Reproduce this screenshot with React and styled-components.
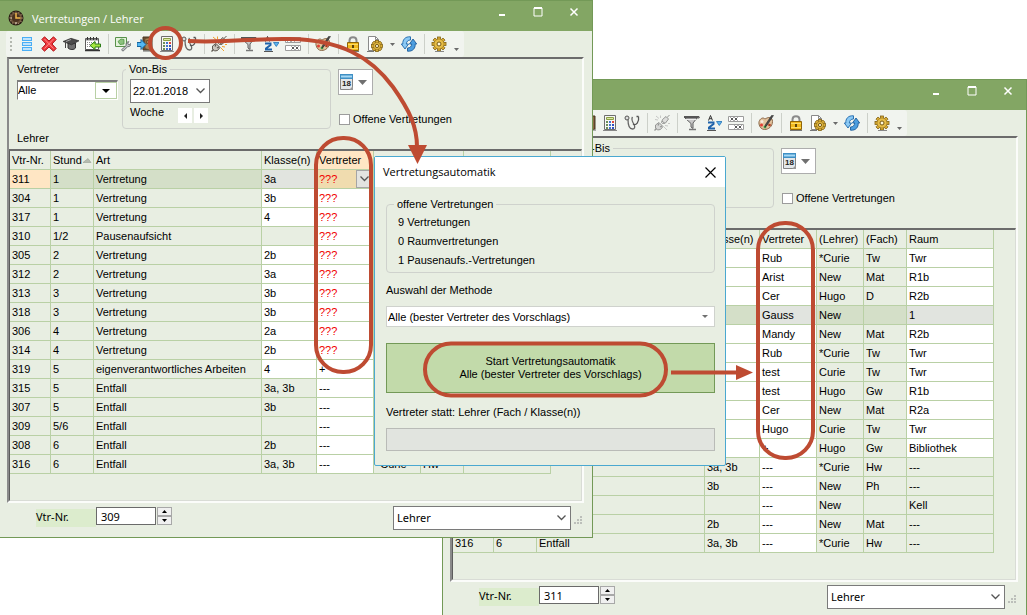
import React from "react"
import styled, { createGlobalStyle } from "styled-components"

const color = {
  face: "#e8eee2",
  title: "#83a664",
  edge: "#739957",
  grid: "#b9d0a5",
  selected: "#d4dfc8",
  disabled: "#e1e4df",
  mark: "#be4b32",
}

const GlobalStyle = createGlobalStyle`
  *, *::before, *::after {
    box-sizing: border-box;
  }
  body {
    margin: 0;
    background: #fff;
  }
  body, button, input, select {
    font: 11px/14px "Liberation Sans", Arial, sans-serif;
    color: #000;
  }
`

const Desktop = styled.main`
  position: relative;
  min-height: 100vh;
  overflow: hidden;
`

/* window frame */

const Window = styled.section`
  position: absolute;
  top: ${props => props.$y}px;
  left: ${props => props.$x}px;
  width: ${props => props.$w}px;
  display: flex;
  flex-direction: column;
  background: ${color.face};
  border: 1px solid ${color.edge};
`

const TitleBar = styled.header`
  display: flex;
  align-items: center;
  height: 30px;
  padding: 0 10px 0 8px;
  background: ${color.title};
  color: #fff;
`

const Title = styled.h1`
  flex: 1;
  margin: 0 0 0 8px;
  padding-top: 5px;
  font: 400 11px/16px "Open Sans", "Noto Sans", sans-serif;
`

const LogoBox = styled.span`
  display: flex;
  width: 16px;
  padding-top: 4px;
`

const CaptionButtons = styled.div`
  display: flex;
  gap: 20px;
  padding-bottom: 8px;
`

const CaptionButton = styled.button`
  display: flex;
  align-items: center;
  justify-content: center;
  width: 16px;
  height: 16px;
  padding: 0;
  border: 0;
  background: none;
  color: inherit;
`

const Toolbar = styled.div`
  display: flex;
  align-items: center;
  align-self: flex-start;
  height: 26px;
  margin-left: 6px;
  padding-right: 2px;
  background: #f1f4ef;
  border-radius: 3px;
`

const Grip = styled.span`
  width: 2px;
  height: 14px;
  margin: 0 4px;
  background: repeating-linear-gradient(#b4b8b0 0 2px, transparent 2px 4px);
`

const ToolButton = styled.button`
  display: flex;
  align-items: center;
  justify-content: center;
  width: ${props => (props.$narrow ? 12 : 22)}px;
  height: 22px;
  padding: 0;
  padding-top: ${props => (props.$low ? 10 : 0)}px;
  border: 0;
  background: none;
`

const Separator = styled.span`
  width: 8px;
  height: 20px;
  background: linear-gradient(#ccd0c9, #ccd0c9) center / 1px 100% no-repeat;
`

const Panel = styled.div`
  height: 446px;
  margin: 0 8px 0 7px;
  border: 2px solid;
  border-color: #6b6b6b #fbfcfa #fbfcfa #8a8a8a;
`

/* filter area */

const FilterBar = styled.div`
  display: flex;
  height: 72px;
  padding: 3px 8px 0;
`

const FilterColumn = styled.div`
  display: flex;
  flex-direction: column;
  gap: 4px;
  width: 101px;
  margin-right: 4px;
`

const Group = styled.fieldset`
  width: ${props => props.$w || "auto"};
  height: ${props => props.$h}px;
  min-width: 0;
  margin: 0;
  padding: ${props => props.$pad};
  border: 1px solid #cfd2cd;
  border-radius: 4px;
`

const Legend = styled.legend`
  margin-left: -4px;
  padding: 0 3px;
  line-height: 14px;
`

const SelectBox = styled.span`
  position: relative;
  display: block;
  width: ${props => props.$w || "auto"};
  height: ${props => props.$h}px;
`

const Select = styled.select`
  appearance: none;
  display: block;
  width: 100%;
  height: 100%;
  padding: 0 ${props => (props.$large ? 3 : 1)}px;
  background: #fff;
  border: 1px solid ${props => props.$line || "#7a7a7a"};
  border-radius: 0;
  ${props => props.$large && `font: 11px/16px "Noto Sans", sans-serif;`}
`

const SunkenSelect = styled(Select)`
  padding: 0 0 2px;
  border-width: 2px 1px 1px;
  border-color: #7d7d7d #fff #fff #7d7d7d;
`

const SelectArrow = styled.span`
  position: absolute;
  top: ${props => (props.$framed ? 2 : 1)}px;
  right: 1px;
  bottom: 1px;
  width: ${props => (props.$framed ? 22 : 18)}px;
  display: flex;
  align-items: center;
  justify-content: center;
  border: ${props => (props.$framed ? "1px solid #b9d0a5" : "0")};
  pointer-events: none;
`

const DateField = styled.label`
  display: flex;
  align-items: center;
  width: 80px;
  height: 24px;
  padding-right: 4px;
  background: #fff;
  border: 1px solid #7a7a7a;
`

const DateInput = styled.input`
  flex: 1;
  min-width: 0;
  padding: 0 2px;
  border: 0;
  background: none;
`

const WeekRow = styled.div`
  display: flex;
  align-items: flex-start;
  gap: 14px;
  padding-top: 2px;
`

const WeekButtons = styled.span`
  display: flex;
  gap: 2px;
  padding-top: 3px;
`

const WeekButton = styled.button`
  display: flex;
  align-items: center;
  justify-content: center;
  width: 14px;
  height: 15px;
  padding: 0;
  border: 0;
  background: #fff;
`

const OptionColumn = styled.div`
  display: flex;
  flex-direction: column;
  align-items: flex-start;
  gap: 17px;
  padding: 7px 0 0 7px;
`

const CalendarButton = styled.button`
  display: flex;
  align-items: center;
  gap: 4px;
  width: 35px;
  height: 26px;
  padding: 0 0 0 1px;
  background: #fff;
  border: 1px solid #adadad;
`

const CheckLabel = styled.label`
  display: flex;
  align-items: center;
  gap: 3px;
  white-space: nowrap;
`

const CheckBox = styled.input`
  appearance: none;
  width: 11px;
  height: 11px;
  margin: 0 0 0 1px;
  background: #fff;
  border: 1px solid #9c9c9c;
`

const Caption = styled.p`
  margin: 0;
  padding: 0 8px 4px;
`

/* lesson table */

const TableFrame = styled.div`
  height: 352px;
  border-top: 2px solid #6b6b6b;
  border-left: 1px solid #5c5c5c;
  border-right: 1px solid #d9dcd6;
  border-bottom: 1px solid #d9dcd6;
  overflow: hidden;
`

const Table = styled.table`
  table-layout: fixed;
  width: 541px;
  border-spacing: 0;
`

const Cell = styled.td`
  height: 19px;
  padding: 0 0 0 2px;
  overflow: hidden;
  white-space: nowrap;
  text-align: left;
  font-weight: 400;
  line-height: 16px;
  background: ${props => props.$bg || "transparent"};
  color: ${props => (props.$open ? "#f00000" : "#000")};
  border: 0 solid ${color.grid};
  border-width: 0 1px 1px 0;
`

const CellRow = styled.span`
  display: flex;
  align-items: center;
  justify-content: space-between;
  height: 18px;
`

const DropButton = styled.button`
  display: flex;
  align-items: center;
  justify-content: center;
  width: 17px;
  height: 18px;
  padding: 0;
  background: #e3e3e0;
  border: 1px solid #a5a5a5;
`

/* footer */

const Footer = styled.footer`
  display: flex;
  align-items: flex-start;
  height: 34px;
  padding: 3px 10px 0 36px;
`

const NumberLabel = styled.label`
  width: 60px;
  height: 18px;
  margin-top: 3px;
  background: #dceccd;
  font: 400 11px/16px "Noto Sans", sans-serif;
`

const NumberInput = styled.input`
  width: 60px;
  height: 18px;
  margin-top: 1px;
  padding: 0 4px;
  background: #fff;
  border: 1px solid #6a6a6a;
  font: 11px/16px "Noto Sans", sans-serif;
`

const Spinner = styled.span`
  display: flex;
  flex-direction: column;
  width: 15px;
  margin: 1px auto 0 1px;
`

const SpinButton = styled.button`
  display: flex;
  align-items: center;
  justify-content: center;
  height: 9px;
  padding: 0;
  background: #f0f0f0;
  border: 1px solid #a8a8a8;
`

const SizeGrip = styled.span`
  display: flex;
  padding: 10px 0 0 3px;
`

/* dialog */

const Dialog = styled.div`
  position: absolute;
  top: 156px;
  left: 374px;
  width: 352px;
  background: ${color.face};
  border: 1px solid #4aa8d0;
  border-radius: 2px;
`

const DialogHead = styled.div`
  display: flex;
  align-items: center;
  justify-content: space-between;
  height: 30px;
  padding: 0 7px 0 8px;
  background: #fff;
`

const DialogTitle = styled.h2`
  margin: 0;
  font: 500 11px/16px "Open Sans", "Noto Sans", sans-serif;
`

const DialogBody = styled.div`
  display: flex;
  flex-direction: column;
  padding: 10px 10px 14px 11px;
`

const CountList = styled.ul`
  display: grid;
  gap: 5px;
  margin: 0;
  padding: 0;
  list-style: none;
`

const FieldLabel = styled.label`
  margin: ${props => props.$gap || "10px 0 9px"};
`

const StartButton = styled.button`
  height: 50px;
  margin-top: 16px;
  padding: 0;
  line-height: 13px;
  background: #c2daaa;
  border: 1px solid ${color.edge};
`

const StatusField = styled.input`
  height: 23px;
  background: ${color.disabled};
  border: 1px solid #b9bbb7;
`

const Marks = styled.svg`
  position: absolute;
  top: 0;
  left: 0;
  pointer-events: none;
`

/* icons */

const Icon = ({ children, w = 16, h = 16, ...rest }) => (
  <svg width={w} height={h} viewBox={`0 0 ${w} ${h}`} fill="none" aria-hidden="true" {...rest}>
    {children}
  </svg>
)

const Triangle = () => (
  <Icon w={5} h={3}>
    <path d="M0 0h5L2.500 3z" fill="#6a6a6a" />
  </Icon>
)

const Chevron = () => (
  <Icon w={9} h={6}>
    <path d="M.5.5l4 4 4-4" stroke="#555" strokeWidth="1.300" />
  </Icon>
)

const LogoIcon = () => (
  <Icon>
    <circle cx="8" cy="8" r="7.500" fill="#2a1d14" />
    <circle cx="8" cy="8" r="6" fill="#6d523a" stroke="#a08468" strokeWidth="1.200" strokeDasharray="1 2" />
    <circle cx="8" cy="8" r="4" fill="#4a3220" />
    <path d="M8 3v5h4.500" stroke="#f1b84c" strokeWidth="1.500" />
    <path d="M2.500 8h1.500M8 12v2" stroke="#e8dccb" />
  </Icon>
)

const ListIcon = () => (
  <Icon>
    {[1, 6, 11].map(y => (
      <rect key={y} x="3.500" y={y + 0.5} width="9" height="3" fill="#bfe3fc" stroke="#4aaef5" />
    ))}
  </Icon>
)

const DeleteIcon = () => (
  <Icon>
    <path
      d="M3.500.8L8 5l4.500-4.200 2.700 2.700L11 8l4.200 4.500-2.700 2.700L8 11l-4.500 4.200-2.700-2.700L5 8 .8 3.500z"
      fill="#ef3b3f"
      stroke="#b0181d"
    />
    <path d="M3.500 3l9 9.500M12.500 3l-9 9.500" stroke="#ff8587" />
  </Icon>
)

const CapIcon = () => (
  <Icon>
    <path d="M5 7v5c2 2 6 2 7.500 0V7z" fill="#6f6f6f" stroke="#333" />
    <path d="M0 5.500L8 2.300l8 2.500-7.500 4z" fill="#4b4b4b" stroke="#222" strokeWidth=".6" />
    <path d="M2.500 6.500V12" stroke="#444" />
    <path d="M3 5.500l5-2" stroke="#a5a5a5" />
  </Icon>
)

const CalendarArrowIcon = () => (
  <Icon>
    <path d="M.5 2.500h13v11H.5z" fill="#fff" stroke="#5c5c5c" />
    <path d="M1 3h12v1.500H1z" fill="#888" />
    <path d="M2.500 1v3M5.500 1v3M8.500 1v3M11.500 1v3" stroke="#333" />
    <path d="M2 6.500h10M2 8.500h4M2 10.500h4" stroke="#8a8a8a" strokeDasharray="1 1" />
    <path d="M0 14.500h15" stroke="#333" strokeWidth="1.500" />
    <path d="M5 9.500l5-4v2.500h5.500v3H10v2.500z" fill="#a4e63e" stroke="#2c7d17" />
  </Icon>
)

const PlanWrenchIcon = () => (
  <Icon>
    <path d="M.5 1.500h11v9H.5z" fill="#e5f2dc" stroke="#58924b" />
    <path d="M6 3L3 5.500 5 8.500 9 8V3.500z" fill="#8cc17e" stroke="#4d9341" strokeWidth=".8" />
    <path
      d="M6.500 13.800l4.700-4.300c-.6-2 .6-3.900 2.700-3.800L12.700 7l.5 1.400 1.500.2 1.100-1.200c.4 2-1.200 3.500-3.100 3.300L8 15.200z"
      fill="#c6c9cc"
      stroke="#55595d"
      strokeWidth=".8"
    />
  </Icon>
)

const DoorIcon = () => (
  <Icon>
    <path d="M6 1h9v13H6z" fill="#6d5237" stroke="#493624" />
    <path d="M8 2.500l6-1v13l-6-2z" fill="#a98055" stroke="#604628" strokeWidth=".7" />
    <path d="M9.500 4.500h3v3h-3z" stroke="#76532f" />
    <path d="M0 6.500h4v-3l5 5-5 5v-3H0z" fill="#53b8f4" stroke="#17649d" />
    <path d="M6 15h10" stroke="#666" />
  </Icon>
)

const CalculatorIcon = () => (
  <Icon>
    <path d="M2.500.5h11v14h-11z" fill="#f8f8f6" stroke="#6e6e6e" />
    <path d="M4.500 2.500h7v2h-7z" fill="#dbe8a5" stroke="#8a9f45" />
    {[6, 9, 12].map(y => (
      <g key={y}>
        <rect x="4" y={y} width="2" height="2" fill="#6c8f5a" />
        <rect x="7" y={y} width="2" height="2" fill="#4272cf" />
        <rect x="10" y={y} width="2" height="2" fill={y === 6 ? "#e0473c" : "#2f50c0"} />
      </g>
    ))}
    <path d="M1 15.500h14" stroke="#888" />
  </Icon>
)

const StethoscopeIcon = () => (
  <Icon>
    <circle cx="3" cy="3" r="2" fill="#ddd" stroke="#555" />
    <path d="M4 4.500c0 6 2 9.500 4.500 9.500 2 0 3-2 1.500-4.500S7 4 8.500 2" stroke="#666" strokeWidth="1.300" />
    <path d="M9 9c3 2 6.500-2 5.500-7.500M12.500 1.500h2" stroke="#555" strokeWidth="1.300" />
  </Icon>
)

const PlugIcon = ({ off }) => (
  <Icon style={{ filter: off ? "grayscale(1)" : "none" }} opacity={off ? 0.6 : 1}>
    <path d="M8.500 4.500l3.500-3 2.500 2.500-3 4-3 .5-1-1z" fill="#d5cfc6" stroke="#5e5850" />
    <path d="M13 2.500L15.500 0M8 6l3 2.500" stroke="#5e5850" />
    <path d="M1.500 10L5 7.500 9 11.500l-2.500 3-3 .5-2-2z" fill="#cac5bd" stroke="#5e5850" />
    <path d="M2.500 13.500L.5 15.500M5 8.500l-1 2M8 11l-2 1" stroke="#5e5850" strokeWidth="1.300" />
    <path d="M2 1l3 2.500M1 4.500l3 .5M6.500.5V3M11 10.500l3 .5M10 12l3 3M14 8.500h2" stroke="#f1a12e" />
  </Icon>
)

const FunnelIcon = () => (
  <Icon>
    <path d="M1 3h12l-4 5v5.500L7 12V8.500z" fill="#c9c9c9" stroke="#5f5f5f" />
    <path d="M0 2h15" stroke="#555" strokeWidth="2" />
    <path d="M2 4.500h10" stroke="#eee" />
    <path d="M13.500 3.500L16 2M5 14.500h7" stroke="#777" strokeWidth="1.300" />
  </Icon>
)

const SortIcon = () => (
  <Icon>
    <path d="M2.500 5.500l2-5 2 5M3.200 3.700h2.600" stroke="#333" />
    <path d="M2 7.500h5.500v1.500L3 12.500v1h6" stroke="#1e62ab" strokeWidth="2" />
    <path d="M10.500 6.500H16l-2.700 4z" fill="#5eb4ee" stroke="#2272b5" strokeWidth=".8" />
    <path d="M1 15.500h9" stroke="#555" />
  </Icon>
)

const FormatIcon = () => (
  <Icon>
    <path d="M.5 1.500h15v5H.5zM.5 9.500h15v5H.5z" fill="#fff" stroke="#9c9c9c" />
    <path
      d="M2.500 2.500l3 3m0-3l-3 3M6.500 2.500l3 3m0-3l-3 3M6.500 10.500l3 3m0-3l-3 3M10.500 10.500l3 3m0-3l-3 3"
      stroke="#444"
      strokeWidth=".9"
    />
  </Icon>
)

const PaletteIcon = () => (
  <Icon>
    <path
      d="M1 9c-.6-3.500 2-6 4-6 1.500 0 1.500 1.500 3 .5C10 2 14.500 2 14.500 6.500c0 5-4 8-8 8C3.500 14.500 1.500 12 1 9z"
      fill="#e3c29c"
      stroke="#8c6a4b"
    />
    <circle cx="4" cy="6.500" r="1.500" fill="#f7ece0" />
    <circle cx="3.500" cy="10" r="1.500" fill="#e23e35" />
    <circle cx="7" cy="12" r="1.400" fill="#3f9b48" />
    <circle cx="11.500" cy="10" r="1.300" fill="#b5371f" />
    <path d="M15.500.5L9 10.500 7 12l.5-2.500L13.500.5z" fill="#4a4a4a" stroke="#222" strokeWidth=".5" />
  </Icon>
)

const LockIcon = () => (
  <Icon>
    <path d="M4.500 8V4.500c0-4.500 7-4.500 7 0V8" stroke="#8a8a8a" strokeWidth="2" />
    <path d="M2.500 6.500h11v8h-11z" fill="#f2b91d" stroke="#8f6508" />
    <path d="M3 8.500h10M3 12.500h10" stroke="#fbdc69" />
    <path d="M7 9h2v3H7z" fill="#5e4308" />
    <path d="M2 15.500h12" stroke="#777" />
  </Icon>
)

const teeth = [0, 45, 90, 135]

const Gear = ({ cx, cy, r }) => (
  <g>
    {teeth.map(a => (
      <rect
        key={a}
        x={cx - 1.5}
        y={cy - r}
        width="3"
        height={r * 2}
        fill="#dcae34"
        stroke="#816114"
        strokeWidth=".8"
        transform={`rotate(${a} ${cx} ${cy})`}
      />
    ))}
    <circle cx={cx} cy={cy} r={r - 2} fill="#e6bd48" stroke="#937019" strokeWidth=".6" />
    <circle cx={cx} cy={cy} r={r / 3.5} fill="#fff8dc" stroke="#76580f" />
  </g>
)

const PageGearIcon = () => (
  <Icon>
    <path d="M1.500.5h7l3 3v11h-10z" fill="#fff" stroke="#8a8a8a" />
    <path d="M8.500.5v3h3" stroke="#8a8a8a" />
    <path d="M0 15.500h7" stroke="#777" />
    <Gear cx={10} cy={10} r={5.5} />
  </Icon>
)

const RefreshIcon = () => (
  <Icon>
    <path
      d="M9.500.8C4 .3 1.500 4 1.800 8H.3l3.700 5 3.500-5H5.300C5.500 5.500 7 4 9.500 4z"
      fill="#8ccaf5"
      stroke="#1d67aa"
      strokeWidth=".9"
    />
    <path
      d="M6.500 15.200c5.500.5 8-3.200 7.700-7.200h1.500L12 3 8.500 8h2.200c-.2 2.500-1.700 4-4.200 4z"
      fill="#4d9edf"
      stroke="#1d5c9b"
      strokeWidth=".9"
    />
  </Icon>
)

const GearIcon = () => (
  <Icon>
    <Gear cx={8} cy={8} r={7} />
    <path d="M4 15.500h9" stroke="#888" />
  </Icon>
)

const DayIcon = () => (
  <Icon w={14} h={17}>
    <path d="M.5.5h12v15H.5z" fill="#e3e7ea" stroke="#848484" />
    <path d="M0 0h13v5H0z" fill="#3f8fc4" />
    <path d="M1 2.500h11" stroke="#a6d8f5" strokeWidth="2" />
    <text x="2" y="12" fontFamily="Liberation Sans" fontSize="8" fontWeight="700" fill="#222">
      18
    </text>
    <path d="M9 16l4-4v4z" fill="#999" />
  </Icon>
)

const tools = [
  ["Liste", ListIcon],
  ["Löschen", DeleteIcon],
  ["Lehrer", CapIcon],
  ["Kalender", CalendarArrowIcon],
  null,
  ["Einstellung", PlanWrenchIcon],
  ["Raum", DoorIcon],
  ["Vertretungsautomatik", CalculatorIcon],
  ["Diagnose", StethoscopeIcon],
  null,
  ["Kopplung", PlugIcon],
  null,
  ["Filter", FunnelIcon],
  ["Sortieren", SortIcon],
  ["Format", FormatIcon],
  null,
  ["Farben", PaletteIcon],
  null,
  ["Sperren", LockIcon],
  ["Seite", PageGearIcon],
  ["Seitenmenü", Triangle, "narrow"],
  ["Aktualisieren", RefreshIcon],
  null,
  ["Optionen", GearIcon],
  ["Mehr", Triangle, "low"],
]

const columns = [
  ["Vtr-Nr.", 41],
  ["Stunde", 43],
  ["Art", 168],
  ["Klasse(n)", 55],
  ["Vertreter", 57],
  ["(Lehrer)", 47],
  ["(Fach)", 43],
  ["Raum", 87],
]

// nr, hour, kind, class, substitute, teacher, subject, room
const lessons = [
  ["311", "1", "Vertretung", "3a", "Rub", "*Curie", "Tw", "Twr"],
  ["304", "1", "Vertretung", "3b", "Arist", "New", "Mat", "R1b"],
  ["317", "1", "Vertretung", "4", "Cer", "Hugo", "D", "R2b"],
  ["310", "1/2", "Pausenaufsicht", "", "Gauss", "New", "", "1"],
  ["305", "2", "Vertretung", "2b", "Mandy", "New", "Mat", "R2b"],
  ["312", "2", "Vertretung", "3a", "Rub", "*Curie", "Tw", "Twr"],
  ["313", "3", "Vertretung", "3b", "test", "Curie", "Tw", "Twr"],
  ["318", "3", "Vertretung", "3b", "test", "Hugo", "Gw", "R1b"],
  ["306", "4", "Vertretung", "2a", "Cer", "New", "Mat", "R2a"],
  ["314", "4", "Vertretung", "2b", "Hugo", "Curie", "Tw", "Twr"],
  ["319", "5", "eigenverantwortliches Arbeiten", "4", "+", "Hugo", "Gw", "Bibliothek"],
  ["315", "5", "Entfall", "3a, 3b", "---", "*Curie", "Hw", "---"],
  ["307", "5", "Entfall", "3b", "---", "New", "Ph", "---"],
  ["309", "5/6", "Entfall", "", "---", "New", "", "Kell"],
  ["308", "6", "Entfall", "2b", "---", "New", "Mat", "---"],
  ["316", "6", "Entfall", "3a, 3b", "---", "*Curie", "Hw", "---"],
]

const cellColor = (row, col, selected, open) => {
  const editable =
    col === 4 || (col === 3 && row < 11 && row !== 3) || (col === 7 && row < 11)
  if (row === selected) {
    if (open && col === 0) return "#ffe6c4"
    if (open && col === 4) return "#f0dcaf"
    return editable ? color.disabled : color.selected
  }
  return editable ? "#fff" : null
}

const LessonTable = ({ open, selected }) => (
  <Table>
    <colgroup>
      {columns.map(([name, width]) => (
        <col key={name} style={{ width }} />
      ))}
    </colgroup>
    <thead>
      <tr>
        {columns.map(([name], i) => (
          <Cell as="th" key={name} $bg={open && i === 4 ? "#ffe6c4" : null}>
            {i === 1 ? (
              <CellRow>
                Stund
                <Icon w={11} h={5}>
                  <path d="M1 4.500h8L6 .5z" fill="#b5bcb0" stroke="#8c9488" strokeWidth=".5" />
                </Icon>
              </CellRow>
            ) : (
              name
            )}
          </Cell>
        ))}
      </tr>
    </thead>
    <tbody>
      {lessons.map((lesson, row) => (
        <tr key={lesson[0]}>
          {lesson.map((value, col) => {
            const missing = open && col === 4 && row < 10
            return (
              <Cell key={col} $bg={cellColor(row, col, selected, open)} $open={missing}>
                {missing && row === selected ? (
                  <CellRow>
                    ???
                    <DropButton aria-label="Vertreter wählen">
                      <Chevron />
                    </DropButton>
                  </CellRow>
                ) : missing ? (
                  "???"
                ) : (
                  value
                )}
              </Cell>
            )
          })}
        </tr>
      ))}
    </tbody>
  </Table>
)

const SubstitutionWindow = ({ id, x, y, w, open, selected, number }) => (
  <Window $x={x} $y={y} $w={w}>
    <TitleBar>
      <LogoBox>
        <LogoIcon />
      </LogoBox>
      <Title>Vertretungen / Lehrer</Title>
      <CaptionButtons>
        <CaptionButton aria-label="Minimieren">
          <Icon w={10} h={10}>
            <path d="M2 8h6" stroke="#fff" strokeWidth="2" />
          </Icon>
        </CaptionButton>
        <CaptionButton aria-label="Maximieren">
          <Icon w={10} h={10}>
            <path d="M1 1h8v8H1z" stroke="#fff" />
            <path d="M1 1h8" stroke="#fff" strokeWidth="2" />
          </Icon>
        </CaptionButton>
        <CaptionButton aria-label="Schließen">
          <Icon w={10} h={10}>
            <path d="M1.500 1.500l7 7M8.500 1.500l-7 7" stroke="#fff" strokeWidth="1.500" />
          </Icon>
        </CaptionButton>
      </CaptionButtons>
    </TitleBar>
    <Toolbar>
      <Grip />
      {tools.map((tool, i) => {
        if (!tool) return <Separator key={i} />
        const [name, Glyph, kind] = tool
        return (
          <ToolButton key={i} aria-label={name} $narrow={!!kind} $low={kind === "low"}>
            {name === "Kopplung" ? <Glyph off={!open} /> : <Glyph />}
          </ToolButton>
        )
      })}
    </Toolbar>
    <Panel>
      <FilterBar>
        <FilterColumn>
          <label htmlFor={`${id}-who`}>Vertreter</label>
          <SelectBox $h={20}>
            <SunkenSelect id={`${id}-who`}>
              <option>Alle</option>
            </SunkenSelect>
            <SelectArrow $framed>
              <Icon w={8} h={4}>
                <path d="M0 0h8L4 4z" fill="#000" />
              </Icon>
            </SelectArrow>
          </SelectBox>
        </FilterColumn>
        <Group $w="209px" $h={67} $pad="3px 0 0 7px">
          <Legend>Von-Bis</Legend>
          <DateField>
            <DateInput aria-label="Datum" defaultValue="22.01.2018" />
            <Chevron />
          </DateField>
          <WeekRow>
            Woche
            <WeekButtons>
              <WeekButton aria-label="Vorige Woche">
                <Icon w={3} h={6}>
                  <path d="M3 0v6L0 3z" fill="#222" />
                </Icon>
              </WeekButton>
              <WeekButton aria-label="Nächste Woche">
                <Icon w={3} h={6}>
                  <path d="M0 0v6l3-3z" fill="#222" />
                </Icon>
              </WeekButton>
            </WeekButtons>
          </WeekRow>
        </Group>
        <OptionColumn>
          <CalendarButton aria-label="Kalender öffnen">
            <DayIcon />
            <Icon w={9} h={5}>
              <path d="M0 0h9L4.500 5z" fill="#707070" />
            </Icon>
          </CalendarButton>
          <CheckLabel>
            <CheckBox type="checkbox" />
            Offene Vertretungen
          </CheckLabel>
        </OptionColumn>
      </FilterBar>
      <Caption>Lehrer</Caption>
      <TableFrame>
        <LessonTable open={open} selected={selected} />
      </TableFrame>
    </Panel>
    <Footer>
      <NumberLabel htmlFor={`${id}-nr`}>Vtr-Nr.</NumberLabel>
      <NumberInput id={`${id}-nr`} defaultValue={number} />
      <Spinner>
        <SpinButton aria-label="Höher">
          <Icon w={5} h={3}>
            <path d="M0 3h5L2.500 0z" fill="#000" />
          </Icon>
        </SpinButton>
        <SpinButton aria-label="Niedriger">
          <Icon w={5} h={3}>
            <path d="M0 0h5L2.500 3z" fill="#000" />
          </Icon>
        </SpinButton>
      </Spinner>
      <SelectBox $w="178px" $h={24}>
        <Select $large aria-label="Ansicht">
          <option>Lehrer</option>
        </Select>
        <SelectArrow>
          <Chevron />
        </SelectArrow>
      </SelectBox>
      <SizeGrip>
        <Icon w={8} h={8}>
          <path d="M6 0h2v2H6zM3 3h2v2H3zM6 3h2v2H6zM0 6h2v2H0zM3 6h2v2H3zM6 6h2v2H6z" fill="#bcbfba" />
        </Icon>
      </SizeGrip>
    </Footer>
  </Window>
)

const AutomaticDialog = () => (
  <Dialog role="dialog" aria-labelledby="auto-title">
    <DialogHead>
      <DialogTitle id="auto-title">Vertretungsautomatik</DialogTitle>
      <CaptionButton aria-label="Schließen">
        <Icon w={11} h={11}>
          <path d="M.5.5l10 10M10.500.5l-10 10" stroke="#000" strokeWidth="1.200" />
        </Icon>
      </CaptionButton>
    </DialogHead>
    <DialogBody>
      <Group $h={76} $pad="4px 11px 0">
        <Legend>offene Vertretungen</Legend>
        <CountList>
          <li>9 Vertretungen</li>
          <li>0 Raumvertretungen</li>
          <li>1 Pausenaufs.-Vertretungen</li>
        </CountList>
      </Group>
      <FieldLabel htmlFor="method">Auswahl der Methode</FieldLabel>
      <SelectBox $h={21}>
        <Select id="method" $line="#cfd2cd">
          <option>Alle (bester Vertreter des Vorschlags)</option>
        </Select>
        <SelectArrow>
          <Icon w={6} h={3}>
            <path d="M0 0h6L3 3z" fill="#707070" />
          </Icon>
        </SelectArrow>
      </SelectBox>
      <StartButton>
        Start Vertretungsautomatik
        <br />
        Alle (bester Vertreter des Vorschlags)
      </StartButton>
      <FieldLabel htmlFor="status" $gap="12px 0 9px">
        Vertreter statt: Lehrer (Fach / Klasse(n))
      </FieldLabel>
      <StatusField id="status" disabled />
    </DialogBody>
  </Dialog>
)

const App = () => (
  <>
    <GlobalStyle />
    <Desktop>
      <SubstitutionWindow id="after" x={442} y={79} w={585} selected={3} number="311" />
      <SubstitutionWindow id="before" x={-1} y={0} w={594} open selected={0} number="309" />
      <AutomaticDialog />
      <Marks width="1027" height="615" viewBox="0 0 1027 615" fill="none" aria-hidden="true">
        <g stroke={color.mark} strokeWidth="4">
          <ellipse cx="165.500" cy="43" rx="15.500" ry="15" />
          <path d="M188 41c40 2 70-3 102-2 50 1 80 17 103 48 17 24 24 40 24 60" />
          <rect x="316" y="138" width="55" height="234" rx="27" />
          <rect x="425" y="343.500" width="241" height="52" rx="26" />
          <rect x="758" y="223" width="55" height="235" rx="27" />
          <path d="M671 372.500h67" />
        </g>
        <path d="M408 145h19l-9.500 19zM736 365v15l17-7.500z" fill={color.mark} />
      </Marks>
    </Desktop>
  </>
)

export default App
